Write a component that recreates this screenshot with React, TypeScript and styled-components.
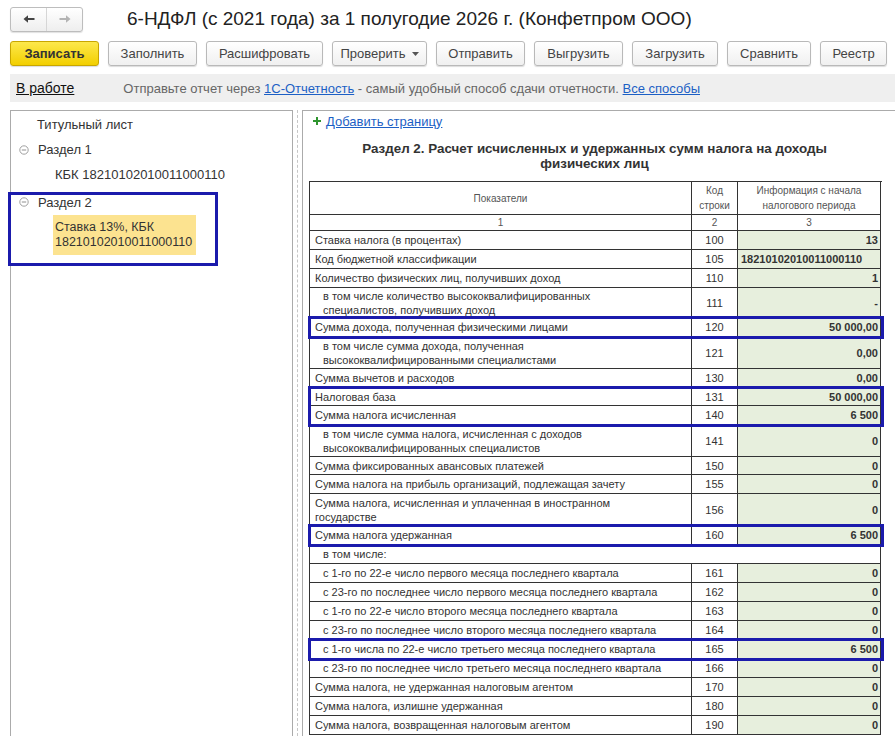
import React from "react";
import styled, { createGlobalStyle } from "styled-components";

const GlobalStyle = createGlobalStyle`
  html, body {
    margin: 0;
    padding: 0;
    background: #fff;
  }
  body {
    font-family: Arial, "Liberation Sans", sans-serif;
    color: #333;
  }
  * {
    box-sizing: border-box;
  }
`;

type TaxRow = {
  label: string;
  code?: string;
  value?: string;
  indent?: boolean;
  h?: number;
  left?: boolean;
  merged?: boolean;
};

const rowsTop: TaxRow[] = [
  { label: "Ставка налога (в процентах)", code: "100", value: "13" },
  { label: "Код бюджетной классификации", code: "105", value: "18210102010011000110", left: true },
  { label: "Количество физических лиц, получивших доход", code: "110", value: "1" },
  {
    label: "в том числе количество высококвалифицированных специалистов, получивших доход",
    code: "111",
    value: "-",
    indent: true,
    h: 30,
  },
];

const row120: TaxRow[] = [
  { label: "Сумма дохода, полученная физическими лицами", code: "120", value: "50 000,00" },
];

const rowsMid: TaxRow[] = [
  {
    label: "в том числе сумма дохода, полученная высококвалифицированными специалистами",
    code: "121",
    value: "0,00",
    indent: true,
    h: 32,
  },
  { label: "Сумма вычетов и расходов", code: "130", value: "0,00" },
];

const rowsBase: TaxRow[] = [
  { label: "Налоговая база", code: "131", value: "50 000,00", h: 18 },
  { label: "Сумма налога исчисленная", code: "140", value: "6 500" },
];

const rowsAfterBase: TaxRow[] = [
  {
    label: "в том числе сумма налога, исчисленная с доходов высококвалифицированных специалистов",
    code: "141",
    value: "0",
    indent: true,
    h: 32,
  },
  { label: "Сумма фиксированных авансовых платежей", code: "150", value: "0", h: 18 },
  { label: "Сумма налога на прибыль организаций, подлежащая зачету", code: "155", value: "0" },
  { label: "Сумма налога, исчисленная и уплаченная в иностранном государстве", code: "156", value: "0", h: 32 },
];

const row160: TaxRow[] = [{ label: "Сумма налога удержанная", code: "160", value: "6 500" }];

const rowsMonths: TaxRow[] = [
  { label: "в том числе:", merged: true, indent: true },
  { label: "с 1-го по 22-е число первого месяца последнего квартала", code: "161", value: "0", indent: true },
  { label: "с 23-го по последнее число первого месяца последнего квартала", code: "162", value: "0", indent: true },
  { label: "с 1-го по 22-е число второго месяца последнего квартала", code: "163", value: "0", indent: true },
  { label: "с 23-го по последнее число второго месяца последнего квартала", code: "164", value: "0", indent: true },
];

const row165: TaxRow[] = [
  { label: "с 1-го числа по 22-е число третьего месяца последнего квартала", code: "165", value: "6 500", indent: true },
];

const rowsEnd: TaxRow[] = [
  { label: "с 23-го по последнее число третьего месяца последнего квартала", code: "166", value: "0", indent: true },
  { label: "Сумма налога, не удержанная налоговым агентом", code: "170", value: "0" },
  { label: "Сумма налога, излишне удержанная", code: "180", value: "0" },
  { label: "Сумма налога, возвращенная налоговым агентом", code: "190", value: "0" },
];

const toolbarButtons: { text: string; w: number; primary?: boolean; menu?: boolean }[] = [
  { text: "Записать", w: 89, primary: true },
  { text: "Заполнить", w: 89 },
  { text: "Расшифровать", w: 117 },
  { text: "Проверить", w: 95, menu: true },
  { text: "Отправить", w: 89 },
  { text: "Выгрузить", w: 89 },
  { text: "Загрузить", w: 86 },
  { text: "Сравнить", w: 84 },
  { text: "Реестр", w: 67 },
];

const ArrowLeft = ({ color }: { color: string }) => (
  <svg width="12" height="10" viewBox="0 0 12 10">
    <path d="M0.5 5 L5 1.2 V4 H11.5 V6 H5 V8.8 Z" fill={color} />
  </svg>
);

const ArrowRight = ({ color }: { color: string }) => (
  <svg width="12" height="10" viewBox="0 0 12 10">
    <path d="M11.5 5 L7 1.2 V4 H0.5 V6 H7 V8.8 Z" fill={color} />
  </svg>
);

const CollapseIcon = () => (
  <svg width="10" height="10" viewBox="0 0 10 10">
    <circle cx="5" cy="5" r="4.2" fill="none" stroke="#a0a0a0" strokeWidth="1" />
    <path d="M2.8 5h4.4" stroke="#909090" strokeWidth="1" />
  </svg>
);

const PlusIcon = () => (
  <svg width="8" height="8" viewBox="0 0 8 8">
    <path d="M3 0h2v3h3v2H5v3H3V5H0V3h3z" fill="#2f952f" />
  </svg>
);

const MenuArrow = () => (
  <svg width="7" height="4" viewBox="0 0 7 4">
    <path d="M0 0h7L3.5 4z" fill="#555" />
  </svg>
);

function renderRows(rows: TaxRow[]) {
  return rows.map((r, i) =>
    r.merged ? (
      <Row key={i} $h={r.h ?? 19}>
        <LabelCell $indent={r.indent} $span>
          <LabelText>{r.label}</LabelText>
        </LabelCell>
      </Row>
    ) : (
      <Row key={i} $h={r.h ?? 19}>
        <LabelCell $indent={r.indent}>
          <LabelText $wrap={(r.h ?? 19) > 24}>{r.label}</LabelText>
        </LabelCell>
        <CodeCell>{r.code}</CodeCell>
        <ValueCell $left={r.left}>{r.value}</ValueCell>
      </Row>
    )
  );
}

export default function App() {
  return (
    <Page>
      <GlobalStyle />
      <Header>
        <NavGroup>
          <NavButton>
            <ArrowLeft color="#454545" />
          </NavButton>
          <NavButton>
            <ArrowRight color="#b4b4b4" />
          </NavButton>
        </NavGroup>
        <Title>6-НДФЛ (с 2021 года) за 1 полугодие 2026 г. (Конфетпром ООО)</Title>
      </Header>

      <Toolbar>
        {toolbarButtons.map((b) => (
          <Button key={b.text} $w={b.w} $primary={b.primary}>
            {b.text}
            {b.menu && <MenuArrow />}
          </Button>
        ))}
      </Toolbar>

      <InfoBar>
        <StatusLink>В работе</StatusLink>
        <Hint>
          Отправьте отчет через <InfoLink>1С-Отчетность</InfoLink> - самый удобный способ сдачи отчетности.{" "}
          <InfoLink>Все способы</InfoLink>
        </Hint>
      </InfoBar>

      <Body>
        <LeftPanel>
          <Tree>
            <TreeItem $level={0}>Титульный лист</TreeItem>
            <TreeItem $level={0} $toggle>
              <CollapseIcon />
              Раздел 1
            </TreeItem>
            <TreeItem $level={1}>КБК 18210102010011000110</TreeItem>
            <TreeGroup>
              <TreeItem $level={0} $toggle>
                <CollapseIcon />
                Раздел 2
              </TreeItem>
              <SelectedItem>
                Ставка 13%, КБК
                <br />
                18210102010011000110
              </SelectedItem>
            </TreeGroup>
          </Tree>
        </LeftPanel>

        <Splitter />

        <RightPanel>
          <AddPage>
            <PlusIcon />
            <AddLink>Добавить страницу</AddLink>
          </AddPage>
          <SectionTitle>
            Раздел 2. Расчет исчисленных и удержанных сумм налога на доходы физических лиц
          </SectionTitle>

          <Table>
            <Row $h={33}>
              <HeadCell>Показатели</HeadCell>
              <HeadCell>
                Код
                <br />
                строки
              </HeadCell>
              <HeadCell>
                Информация с начала
                <br />
                налогового периода
              </HeadCell>
            </Row>
            <Row $h={16}>
              <HeadCell>1</HeadCell>
              <HeadCell>2</HeadCell>
              <HeadCell>3</HeadCell>
            </Row>
            {renderRows(rowsTop)}
            <Highlight>{renderRows(row120)}</Highlight>
            {renderRows(rowsMid)}
            <Highlight>{renderRows(rowsBase)}</Highlight>
            {renderRows(rowsAfterBase)}
            <Highlight>{renderRows(row160)}</Highlight>
            {renderRows(rowsMonths)}
            <Highlight>{renderRows(row165)}</Highlight>
            {renderRows(rowsEnd)}
          </Table>
        </RightPanel>
      </Body>
    </Page>
  );
}

const Page = styled.div`
  width: 895px;
  height: 736px;
  overflow: hidden;
  background: #fff;
`;

const Header = styled.div`
  display: flex;
  align-items: center;
  height: 38px;
  padding-left: 10px;
`;

const NavGroup = styled.div`
  display: flex;
  width: 73px;
  height: 25px;
  border: 1px solid #bdbdbd;
  border-radius: 3px;
  background: linear-gradient(#ffffff, #eeeeee);
  box-shadow: 0 1px 1px rgba(0, 0, 0, 0.12);
`;

const NavButton = styled.div`
  flex: 1;
  display: flex;
  align-items: center;
  justify-content: center;

  & + & {
    border-left: 1px solid #d6d6d6;
  }
`;

const Title = styled.div`
  margin-left: 44px;
  font-size: 19px;
  color: #222;
  white-space: nowrap;
`;

const Toolbar = styled.div`
  display: flex;
  gap: 9px;
  padding-left: 10px;
  margin-top: 3px;
`;

const Button = styled.div<{ $w: number; $primary?: boolean }>`
  display: flex;
  align-items: center;
  justify-content: center;
  gap: 6px;
  width: ${(p) => p.$w}px;
  height: 25px;
  border: 1px solid ${(p) => (p.$primary ? "#c8a600" : "#b9b9b9")};
  border-radius: 3px;
  background: ${(p) =>
    p.$primary ? "linear-gradient(#fde84c, #f2cf00)" : "linear-gradient(#ffffff, #f0f0f0)"};
  box-shadow: 0 1px 1px rgba(0, 0, 0, 0.14);
  font-size: 13px;
  font-weight: ${(p) => (p.$primary ? "bold" : "normal")};
  color: ${(p) => (p.$primary ? "#333" : "#444")};
  white-space: nowrap;
`;

const InfoBar = styled.div`
  display: flex;
  align-items: center;
  height: 28px;
  margin: 8px 0 0 10px;
  padding-left: 6px;
  background: #efefef;
  font-size: 13px;
  white-space: nowrap;
`;

const StatusLink = styled.span`
  color: #111;
  font-size: 14px;
  text-decoration: underline;
  margin-right: 49px;
`;

const Hint = styled.span`
  color: #666;
`;

const InfoLink = styled.span`
  color: #1c5fc5;
  text-decoration: underline;
`;

const Body = styled.div`
  display: flex;
  height: 626px;
  margin-top: 8px;
`;

const LeftPanel = styled.div`
  width: 283px;
  margin-left: 10px;
  border: 1px solid #ababab;
  border-bottom: none;
`;

const Tree = styled.div`
  padding-top: 1px;
  font-size: 13px;
  color: #333;
`;

const TreeItem = styled.div<{ $level: number; $toggle?: boolean }>`
  display: flex;
  align-items: center;
  gap: 9px;
  height: 25px;
  padding-left: ${(p) => (p.$level === 1 ? 44 : p.$toggle ? 8 : 26)}px;
  white-space: nowrap;
`;

const TreeGroup = styled.div`
  position: relative;
  width: 206px;
  margin-top: 7px;
  margin-left: -1px;
  padding-left: 1px;
  padding-bottom: 9px;
  outline: 3px solid #1b1bac;
  outline-offset: -1px;

  & > ${TreeItem} {
    height: 16px;
  }
`;

const SelectedItem = styled.div`
  width: 143px;
  margin-top: 5px;
  margin-left: 42px;
  padding: 5px 2px 5px;
  font-size: 12.5px;
  line-height: 15px;
  background: #fce390;
  color: #333;
`;

const Splitter = styled.div`
  display: flex;
  justify-content: center;
  width: 9px;

  &::before {
    content: "";
    border-left: 1px dashed #c6c6c6;
  }
`;

const RightPanel = styled.div`
  flex: 1;
  padding-left: 6px;
  border-top: 1px solid #ababab;
  border-left: 1px solid #ababab;
`;

const AddPage = styled.div`
  display: flex;
  align-items: center;
  gap: 5px;
  height: 20px;
  padding-left: 4px;
  font-size: 13px;
`;

const AddLink = styled.span`
  color: #1c5fc5;
  text-decoration: underline;
`;

const SectionTitle = styled.div`
  width: 571px;
  padding: 0 40px;
  margin-top: 10px;
  margin-bottom: 10px;
  font-size: 13.4px;
  font-weight: bold;
  line-height: 15px;
  text-align: center;
  color: #333;
`;

const Table = styled.div`
  width: 573px;
  border-left: 1px solid #333;
  border-top: 1px solid #333;
  font-size: 11px;
  color: #333;
`;

const Row = styled.div<{ $h: number }>`
  display: grid;
  grid-template-columns: 382px 46px 143px;
  height: ${(p) => p.$h}px;
`;

const Cell = styled.div`
  display: flex;
  align-items: center;
  overflow: hidden;
  border-right: 1px solid #333;
  border-bottom: 1px solid #333;
`;

const HeadCell = styled(Cell)`
  justify-content: center;
  text-align: center;
  font-size: 10px;
  line-height: 15px;
  color: #555;
`;

const LabelCell = styled(Cell)<{ $indent?: boolean; $span?: boolean }>`
  grid-column: ${(p) => (p.$span ? "1 / -1" : "auto")};
  padding-left: ${(p) => (p.$indent ? 13 : 5)}px;
  padding-right: 4px;
  line-height: 14px;
`;

const LabelText = styled.span<{ $wrap?: boolean }>`
  max-width: ${(p) => (p.$wrap ? "306px" : "none")};
  white-space: ${(p) => (p.$wrap ? "normal" : "nowrap")};
`;

const CodeCell = styled(Cell)`
  justify-content: center;
`;

const ValueCell = styled(Cell)<{ $left?: boolean }>`
  justify-content: ${(p) => (p.$left ? "flex-start" : "flex-end")};
  padding: 0 2px 0 3px;
  background: #e7efdd;
  font-weight: bold;
`;

const Highlight = styled.div`
  position: relative;
  z-index: 1;
  outline: 3px solid #1b1bac;
  outline-offset: -1px;
`;
